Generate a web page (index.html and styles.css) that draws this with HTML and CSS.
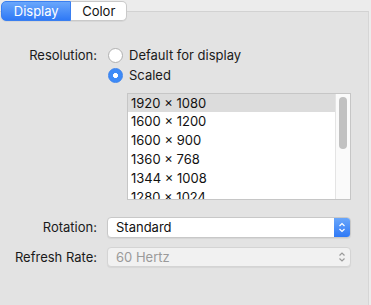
FILE: index.html
```html
<!DOCTYPE html>
<html lang="en">
<head>
  <meta charset="UTF-8" />
  <title>Display</title>
  <link rel="stylesheet" href="styles.css">
</head>
<body>

<div class="tabs">
  <div class="tab active">Display</div>
  <div class="tab">Color</div>
</div>

<div class="panel">
  <div class="form">
    <div class="label res-label">Resolution:</div>
    <div class="radios">
      <div class="radio-row"><span class="radio"></span>Default for display</div>
      <div class="radio-row"><span class="radio on"></span>Scaled</div>
    </div>

    <div></div>
    <div class="list">
      <div class="rows">
        <div class="row sel">1920 × 1080</div>
        <div class="row">1600 × 1200</div>
        <div class="row">1600 × 900</div>
        <div class="row">1360 × 768</div>
        <div class="row">1344 × 1008</div>
        <div class="row">1280 × 1024</div>
      </div>
      <div class="scroll"><div class="thumb"></div></div>
    </div>

    <div class="label pop-label">Rotation:</div>
    <div class="popup">
      <span class="val">Standard</span>
      <span class="stepper">
        <svg width="16" height="19" viewBox="0 0 16 19"><path d="M5.5 8 L8 5.5 L10.5 8 M5.5 11 L8 13.5 L10.5 11" fill="none" stroke="#fff" stroke-width="1.2"/></svg>
      </span>
    </div>

    <div class="label pop-label second">Refresh Rate:</div>
    <div class="popup off">
      <span class="val">60 Hertz</span>
      <span class="stepper">
        <svg width="16" height="18" viewBox="0 0 16 18"><path d="M5.5 7.5 L8 5 L10.5 7.5 M5.5 10.5 L8 13 L10.5 10.5" fill="none" stroke="#9a9a9a" stroke-width="1.2"/></svg>
      </span>
    </div>
  </div>
</div>

</body>
</html>
```

FILE: styles.css
```css
body { margin: 0; background: #ececec; font-family: Inter, "Noto Sans", sans-serif; font-size: 13px; color: #1a1a1a; height: 305px; overflow: hidden; }

.tabs { display: flex; position: relative; z-index: 1; margin: 1px 0 -10px 1px; height: 20px; width: 126px; }
.tab { height: 18px; line-height: 18px; text-align: center; background: #fff; border: 1px solid #c9c9c9; border-left: none; border-radius: 0 5px 5px 0; width: 55px; color: #111; box-shadow: 0 1px 0 rgba(0,0,0,0.05); }
.tab.active { width: 69px; color: #fff; border: 1px solid #3a7ff0; border-radius: 5px 0 0 5px; background: linear-gradient(#6aa7fb, #2f79f6); }

.panel { background: #e3e3e3; border-top: 1px solid #d2d2d2; border-right: 1px solid #d6d6d6; width: 369px; height: 294px; box-sizing: border-box; padding: 33px 17px 0 0; }

.form { display: grid; grid-template-columns: 97px 1fr; column-gap: 10px; }
.label { text-align: right; color: #1a1a1a; }
.res-label { line-height: 20px; }

.radios { margin-left: 1px; }
.radio-row { display: flex; align-items: center; height: 20px; gap: 6px; color: #1a1a1a; }
.radio { width: 13px; height: 13px; border-radius: 50%; background: #fff; border: 1px solid #b0b0b0; box-sizing: content-box; }
.radio.on { background: radial-gradient(circle, #fff 0 2.2px, #3d8af7 2.8px); border-color: #3b83ee; }

.list { display: flex; margin: 8px 0 0 20px; height: 107px; border: 1px solid #c6c6c6; background: #fff; box-sizing: border-box; overflow: hidden; }
.rows { flex: 1; }
.row { height: 19px; line-height: 19px; padding-left: 3px; color: #111; }
.row.sel { background: #dcdcdc; height: 18px; line-height: 18px; }
.scroll { width: 15px; background: #fafafa; border-left: 1px solid #e4e4e4; padding: 3px 0 0 3px; box-sizing: border-box; }
.thumb { width: 8px; height: 52px; border-radius: 4px; background: #c1c1c1; }

.pop-label { line-height: 21px; margin-top: 17px; }
.popup { display: flex; margin-top: 17px; height: 21px; box-sizing: border-box; border: 1px solid #c8c8c8; border-radius: 4px; background: #fff; overflow: hidden; box-shadow: 0 1px 1px rgba(0,0,0,0.06); }
.popup .val { flex: 1; line-height: 19px; padding-left: 8px; color: #111; }
.stepper { width: 16px; background: linear-gradient(#6aa7fb, #2f79f6); display: flex; }

.pop-label.second { margin-top: 9px; line-height: 20px; }
.popup.off { margin-top: 9px; height: 20px; background: #f1f1f1; border-color: #d4d4d4; }
.popup.off .val { color: #9a9a9a; line-height: 18px; }
.popup.off .stepper { background: none; }
```
